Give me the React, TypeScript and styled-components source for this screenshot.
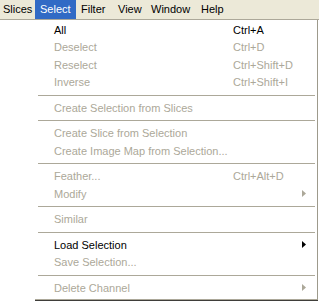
import React from 'react';
import styled, { createGlobalStyle } from 'styled-components';

const GlobalStyle = createGlobalStyle`
  html, body {
    margin: 0;
    padding: 0;
    background: #ffffff;
  }
  body {
    font-family: "Liberation Sans", Arial, sans-serif;
    font-size: 11px;
  }
`;

const Screen = styled.div`
  position: relative;
  width: 319px;
  height: 301px;
  overflow: hidden;
  background: #ffffff;
`;

const MenuBar = styled.div`
  display: flex;
  align-items: stretch;
  height: 19px;
  background: #ece9d8;
  border-bottom: 1px solid #aca899;
  box-shadow: 0 1px 0 #ffffff;
`;

const BarItem = styled.div<{ open?: boolean; w: number; first?: boolean }>`
  display: flex;
  align-items: center;
  width: ${p => p.w}px;
  box-sizing: border-box;
  padding-left: ${p => (p.first ? '3px' : '5px')};
  color: ${p => (p.open ? '#ffffff' : '#000000')};
  background: ${p => (p.open ? '#316ac5' : 'transparent')};
  font-size: 11px;
  line-height: 19px;
  white-space: nowrap;
`;

const Dropdown = styled.div`
  position: absolute;
  left: 35px;
  top: 20px;
  width: 282px;
  padding: 1px 0 2px;
  background: #ffffff;
  border-right: 1px solid #9d9a8c;
  border-bottom: 1px solid #aca899;
  box-shadow: 0 2px 0 #3f3e3a;
`;

const Row = styled.div<{ disabled?: boolean }>`
  display: flex;
  align-items: center;
  height: 17.5px;
  padding: 0 10px 0 19px;
  color: ${p => (p.disabled ? '#aca899' : '#000000')};
  font-size: 11px;
  white-space: nowrap;
`;

const Label = styled.span`
  flex: 1;
`;

const Shortcut = styled.span`
  width: 74px;
`;

const Arrow = styled.svg`
  width: 4px;
  height: 7px;
  margin-right: 1px;
`;

const Separator = styled.div`
  height: 8px;
  display: flex;
  align-items: center;
  padding: 0 2px 0 3px;

  &::after {
    content: '';
    flex: 1;
    height: 1px;
    background: #aca899;
  }
`;

type Item =
  | { sep: true }
  | { sep?: false; label: string; shortcut?: string; disabled?: boolean; sub?: boolean };

const items: Item[] = [
  { label: 'All', shortcut: 'Ctrl+A' },
  { label: 'Deselect', shortcut: 'Ctrl+D', disabled: true },
  { label: 'Reselect', shortcut: 'Ctrl+Shift+D', disabled: true },
  { label: 'Inverse', shortcut: 'Ctrl+Shift+I', disabled: true },
  { sep: true },
  { label: 'Create Selection from Slices', disabled: true },
  { sep: true },
  { label: 'Create Slice from Selection', disabled: true },
  { label: 'Create Image Map from Selection...', disabled: true },
  { sep: true },
  { label: 'Feather...', shortcut: 'Ctrl+Alt+D', disabled: true },
  { label: 'Modify', disabled: true, sub: true },
  { sep: true },
  { label: 'Similar', disabled: true },
  { sep: true },
  { label: 'Load Selection', sub: true },
  { label: 'Save Selection...', disabled: true },
  { sep: true },
  { label: 'Delete Channel', disabled: true, sub: true },
];

const bar = [
  { name: 'Slices', w: 35 },
  { name: 'Select', w: 41 },
  { name: 'Filter', w: 37 },
  { name: 'View', w: 33 },
  { name: 'Window', w: 50 },
  { name: 'Help', w: 40 },
];

export default function App() {
  return (
    <Screen>
      <GlobalStyle />
      <MenuBar>
        {bar.map((b, i) => (
          <BarItem key={b.name} w={b.w} first={i === 0} open={b.name === 'Select'}>
            {b.name}
          </BarItem>
        ))}
      </MenuBar>
      <Dropdown>
        {items.map((it, i) =>
          it.sep ? (
            <Separator key={i} />
          ) : (
            <Row key={i} disabled={it.disabled}>
              <Label>{it.label}</Label>
              {it.shortcut && <Shortcut>{it.shortcut}</Shortcut>}
              {it.sub && (
                <Arrow viewBox="0 0 4 7">
                  <path d="M0 0 L4 3.5 L0 7 Z" fill={it.disabled ? '#aca899' : '#000000'} />
                </Arrow>
              )}
            </Row>
          )
        )}
      </Dropdown>
    </Screen>
  );
}
